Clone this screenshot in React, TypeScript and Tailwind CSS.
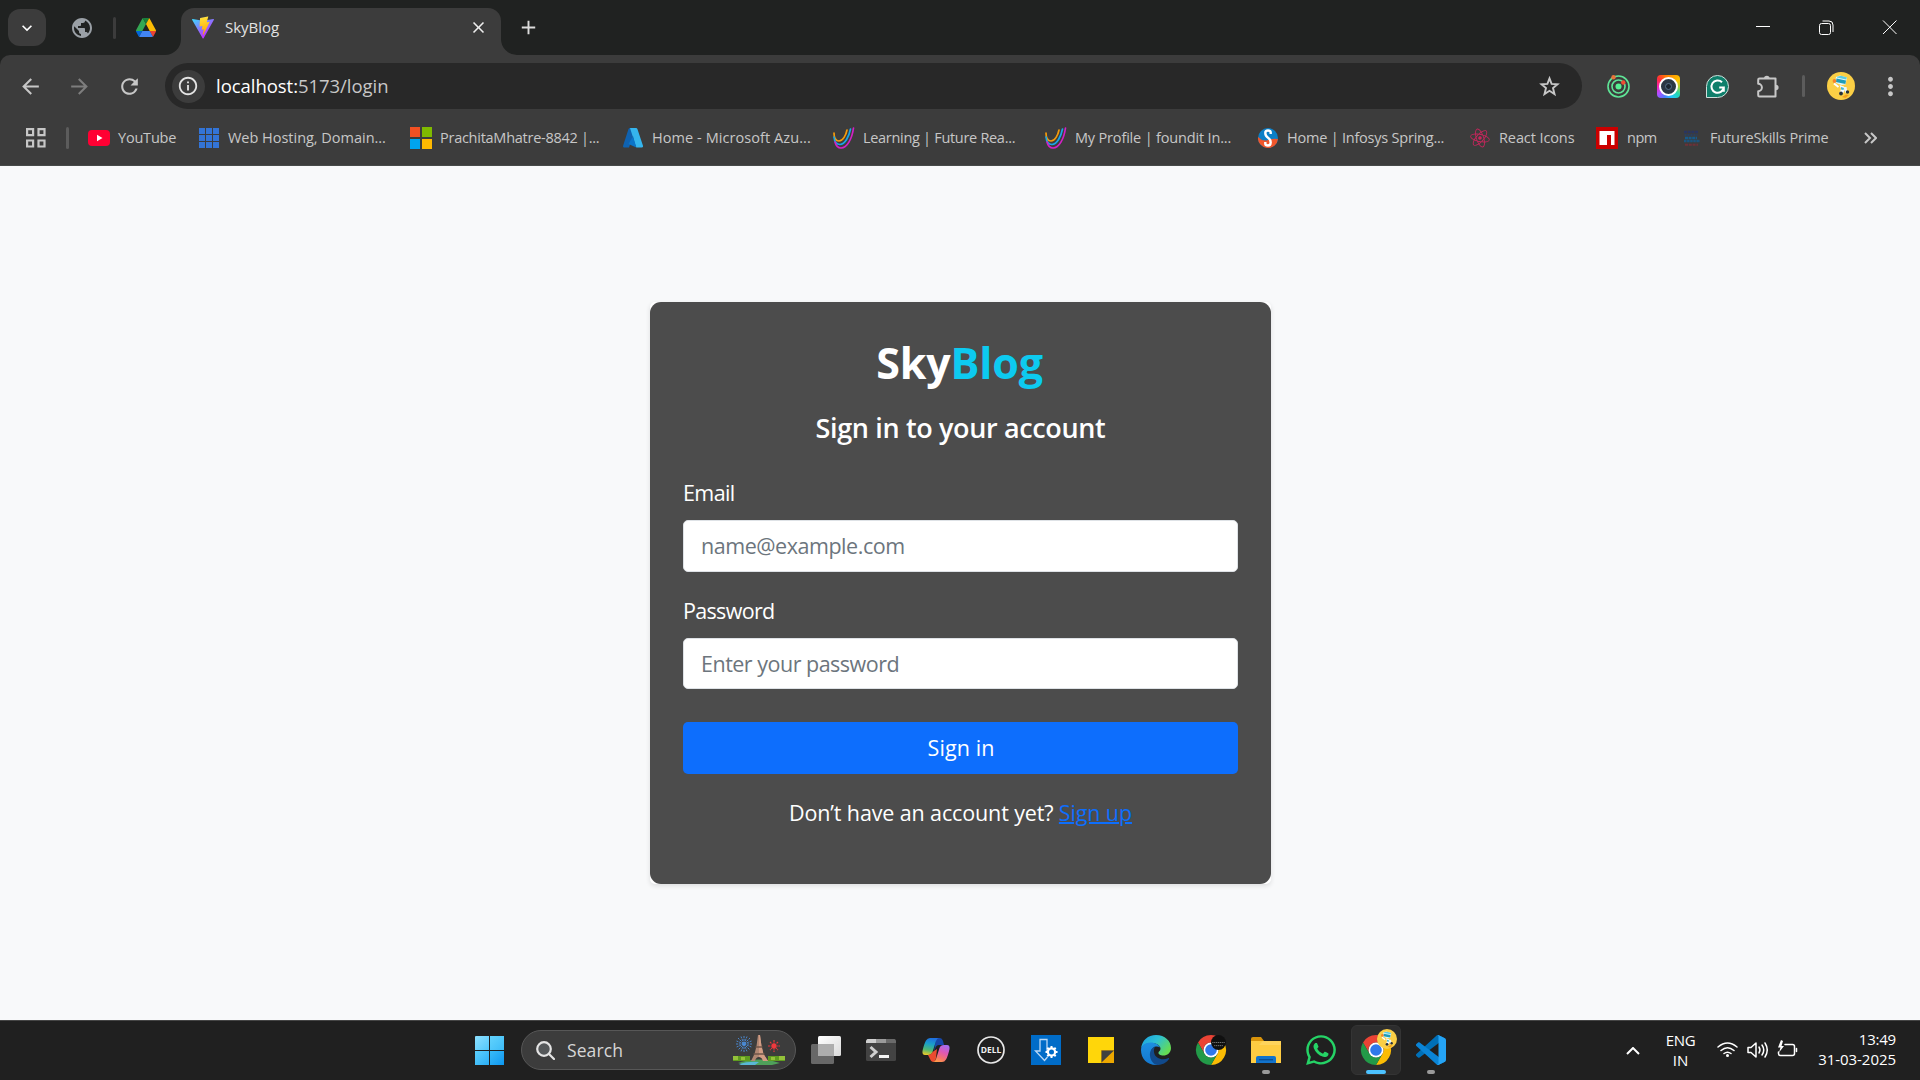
import type { ReactNode } from "react";
import { MdAdd, MdArrowBack, MdArrowForward, MdClose, MdInfoOutline, MdKeyboardArrowDown, MdMoreVert, MdPublic, MdRefresh } from "react-icons/md";
import { FaReact, FaWhatsapp } from "react-icons/fa";

function ViteLogo() {
  return (
    <svg viewBox="0 0 256 257" className="h-[23px] w-[22px] shrink-0">
      <defs>
        <linearGradient id="viteA" x1="0" x2=".6" y1=".1" y2=".85"><stop stopColor="#41D1FF" /><stop offset="1" stopColor="#BD34FE" /></linearGradient>
        <linearGradient id="viteB" x1=".4" x2=".5" y1="0" y2=".9"><stop stopColor="#FFEA83" /><stop offset=".1" stopColor="#FFDD35" /><stop offset="1" stopColor="#FFA800" /></linearGradient>
      </defs>
      <path fill="url(#viteA)" d="M255.153 37.938L134.897 252.976c-2.483 4.44-8.862 4.466-11.382.048L.875 37.958c-2.746-4.814 1.371-10.646 6.827-9.67l120.385 21.517a6.537 6.537 0 0 0 2.322-.004l117.867-21.483c5.438-.991 9.574 4.796 6.877 9.62Z" />
      <path fill="url(#viteB)" d="M185.432.063L96.44 17.501a3.268 3.268 0 0 0-2.634 3.014l-5.474 92.456a3.268 3.268 0 0 0 3.997 3.378l24.777-5.718c2.318-.535 4.413 1.507 3.936 3.838l-7.361 36.047c-.495 2.426 1.782 4.5 4.151 3.78l15.304-4.649c2.372-.72 4.652 1.36 4.15 3.788l-11.698 56.621c-.732 3.542 3.979 5.473 5.943 2.437l1.313-2.028l72.516-144.72c1.215-2.423-.88-5.186-3.54-4.672l-25.505 4.922c-2.396.462-4.435-1.77-3.759-4.114l16.646-57.705c.677-2.35-1.37-4.583-3.769-4.113Z" />
    </svg>
  );
}

function DriveLogo() {
  return (
    <svg viewBox="0 0 87.3 78" preserveAspectRatio="none" className="h-[19px] w-[20px]">
      <path fill="#0066da" d="m6.6 66.85 3.85 6.65c.8 1.4 1.95 2.5 3.3 3.3l13.75-23.8h-27.5c0 1.55.4 3.1 1.2 4.5z" />
      <path fill="#34a853" d="m43.65 25-13.75-23.8c-1.35.8-2.5 1.9-3.3 3.3l-25.4 44a9.06 9.06 0 0 0 -1.2 4.5h27.5z" />
      <path fill="#ea4335" d="m73.55 76.8c1.35-.8 2.5-1.9 3.3-3.3l1.6-2.75 7.65-13.25c.8-1.4 1.2-2.95 1.2-4.5h-27.502l5.852 11.5z" />
      <path fill="#188038" d="m43.65 25 13.75-23.8c-1.35-.8-2.9-1.2-4.5-1.2h-18.5c-1.6 0-3.15.45-4.5 1.2z" />
      <path fill="#4285f4" d="m59.8 53h-32.3l-13.75 23.8c1.35.8 2.9 1.2 4.5 1.2h50.8c1.6 0 3.15-.45 4.5-1.2z" />
      <path fill="#fbbc04" d="m73.4 26.5-12.7-22c-.8-1.4-1.95-2.5-3.3-3.3l-13.75 23.8 16.15 28h27.45c0-1.55-.4-3.1-1.2-4.5z" />
    </svg>
  );
}

function Flare({ flip = false }: { flip?: boolean }) {
  return (
    <svg viewBox="0 0 16 16" className={flip ? "size-4 self-end -scale-x-100" : "size-4 self-end"}>
      <path d="M16 0v16H0A16 16 0 0 0 16 0z" fill="#3c3c3c" />
    </svg>
  );
}

function TabStrip() {
  return (
    <div className="flex h-[55px] items-center bg-[#202221]">
      <div className="ml-2 flex h-[37px] w-[38px] items-center justify-center rounded-[12px] bg-[#3c3c3c] text-white">
        <MdKeyboardArrowDown className="size-5" />
      </div>
      <MdPublic className="ml-[24px] size-6 text-[#9aa0a6]" />
      <div className="ml-[19px] h-[22px] w-[3px] rounded bg-[#3c3c3c]" />
      <div className="ml-[20px]"><DriveLogo /></div>
      <div className="ml-[9px] flex h-full items-end">
        <Flare />
        <div className="flex h-[47px] w-[320px] items-center rounded-t-[13px] bg-[#3c3c3c] pb-[9px] pl-[11px]">
          <ViteLogo />
          <span className="ml-[11px] w-[244px] whitespace-nowrap text-[15px] leading-5 tracking-[-0.04px] text-[#e3e3e3]">SkyBlog</span>
          <MdClose className="size-[19px] shrink-0 text-[#eee]" />
        </div>
        <Flare flip />
      </div>
      <MdAdd className="size-[23px] text-[#dcdcdc]" />
      <svg className="mr-[23px] ml-auto h-[15px] w-[141px]" viewBox="0 0 141 15" fill="none" stroke="#fff">
        <path d="M0 6.5h14" />
        <rect x="63.5" y="3.5" width="11" height="11" rx="2" />
        <path d="M66.500 1h6.500a4 4 0 0 1 4 4v7" />
        <path d="m127 .5 13.500 13.500M140.500.5 127 14" />
      </svg>
    </div>
  );
}

function Toolbar() {
  return (
    <div className="flex h-[62px] items-center text-[#c7c7c7]">
      <MdArrowBack className="ml-[18px] size-[25px]" />
      <MdArrowForward className="ml-[24px] size-[25px] text-[#7d7d7d]" />
      <MdRefresh className="ml-[25px] size-[25px]" />
      <div className="ml-[23px] flex h-[46px] w-[1417px] items-center rounded-full bg-[#282828]">
        <div className="ml-[6.500px] flex size-[33px] items-center justify-center rounded-full bg-[#3c3c3c]">
          <MdInfoOutline className="size-[22px] text-[#e3e3e3]" />
        </div>
        <span className="-mt-px ml-[11.500px] whitespace-nowrap text-[18.500px] leading-6 tracking-[-0.04px] text-[#c7c7c7]"><span className="text-white">localhost:</span>5173/login</span>
        <svg className="mr-[22px] ml-auto size-[21px]" viewBox="0 0 21 21" fill="none" stroke="#c7c7c7" strokeWidth="1.900"><path d="m10.500 2.400 2.100 5.500 5.900.4-4.500 3.800 1.500 6-5-3.300-5 3.300 1.500-6-4.500-3.800 5.900-.4z" /></svg>
      </div>
      <svg className="ml-[25px] size-[23px]" viewBox="0 0 23 23" fill="none" stroke="#5fe496" strokeWidth="1.600">
        <circle cx="11.500" cy="11.500" r="10.500" /><circle cx="11.500" cy="11.500" r="6.500" /><circle cx="11.500" cy="11.500" r="3" fill="#57f092" stroke="none" />
        <circle cx="6.500" cy="2.300" r="2.200" fill="#e8743a" stroke="none" /><circle cx="16.300" cy="7.500" r="2.200" fill="#ef4d32" stroke="none" />
      </svg>
      <div className="ml-[27px] flex size-[23px] items-center justify-center rounded-[4px] bg-[conic-gradient(from_20deg,#ff9a00,#ffc400,#a8d13a,#20d7b0,#23c8ff,#4a7dff,#b44dff,#ff1eb0,#ff2e3a,#ff7a00,#ff9a00)]">
        <div className="flex size-[19px] items-center justify-center rounded-full border-2 border-white bg-[#2b3845]"><div className="size-[7px] rounded-full border border-[#56708a] bg-[#1d2731]" /></div>
      </div>
      <svg className="ml-[26px] size-[23px]" viewBox="0 0 23 23">
        <path d="M11.500.5a11 11 0 1 1 0 22H.5v-11A11 11 0 0 1 11.500.5z" fill="#0f7f6b" stroke="#cfe0dc" />
        <path d="M16 7.200A6.200 6.200 0 1 0 17.800 12.500H13.200M17.800 12.500v4.300" fill="none" stroke="#fff" strokeWidth="2" />
      </svg>
      <svg className="ml-[28px] h-[23px] w-[22px]" viewBox="0 0 22 23">
        <path d="M2.500 3.500h16v18h-16q-1.300 0-1.300-1.300V16.200a3.700 3.700 0 0 0 0-7.400V4.800q0-1.300 1.300-1.300z" fill="none" stroke="#c7c7c7" strokeWidth="2" strokeLinejoin="round" />
        <path d="M7 3.500a2.800 2.800 0 0 1 5.600 0zM18.800 9.700a2.800 2.800 0 0 1 0 5.600z" fill="#c7c7c7" />
      </svg>
      <div className="ml-[23px] h-[22px] w-[3px] rounded bg-[#5c5c5c]" />
      <div className="ml-[22px]"><Avatar className="size-7" /></div>
      <MdMoreVert className="ml-[21px] size-[29px]" />
    </div>
  );
}

function Avatar({ className }: { className: string }) {
  return (
    <svg viewBox="0 0 28 28" className={className}>
      <circle cx="14" cy="14" r="14" fill="#fbcf45" />
      <path d="m9 5 4-1.500 7 2-1.500 7-4 .5L8 10.500z" fill="#dff6fb" />
      <path d="m9.500 6.500 9.500 2-.6 3.500-9.500-2z" fill="#1f9cb6" />
      <path d="m10 4.700 4-1 6 1.800-1 2-9-2z" fill="#5ccbe0" />
      <path d="m12.500 13 4.500 1.500.5 4-1.500 3-3.500-.5 1.500-4z" fill="#f5fbff" />
      <path d="M16.500 15h3l1 5-2 1z" fill="#e9f6fa" /><path d="m14 15 3 1-.5 2-2.500-.5z" fill="#45b8d2" />
      <circle cx="7.500" cy="9" r="1.900" fill="#f5842b" /><path d="m7 11.500 4.500 3.500" stroke="#fff" strokeWidth="2" />
      <circle cx="14" cy="21.500" r="1.900" fill="#28323b" /><circle cx="20.500" cy="20" r="1.700" fill="#28323b" />
      <path d="m15 25 4-2.500 3 .5-3.500 3z" fill="#f5a01e" />
    </svg>
  );
}

function Foundit() {
  return (
    <svg viewBox="0 0 22 22" className="size-[22px]" fill="none" strokeWidth="1.700" strokeLinecap="round">
      <path d="M1 6c0 5 2 8 5 8 4 0 7-6 8-11" stroke="#f59b0b" />
      <path d="M1 10c.500 5 3 7.500 6 7.500 5 0 9-8 10.500-15.500" stroke="#19a7e8" />
      <path d="M2 15c1 4 3 6 6 6 6 0 11-9 12.500-20" stroke="#d321c4" />
    </svg>
  );
}

const bookmarks: { icon: ReactNode; label: string; box: string; text: string }[] = [
  { label: "YouTube", box: "w-[111px] gap-[8px]", text: "tracking-[-0.2px]", icon: <svg viewBox="0 0 22 16" className="h-4 w-[22px]"><rect width="22" height="16" rx="4" fill="#ff0033" /><path d="M9 4.800v6.400l5.500-3.200z" fill="#fff" /></svg> },
  { label: "Web Hosting, Domain...", box: "w-[211px] gap-[9px]", text: "tracking-[-0.02px]", icon: <div className="grid size-5 grid-cols-3 gap-px">{Array.from({ length: 9 }, (_, i) => <i key={i} className="bg-[#3374d6]" />)}</div> },
  { label: "PrachitaMhatre-8842 |...", box: "w-[213px] gap-[8px]", text: "tracking-[-0.26px]", icon: <div className="grid size-[22px] grid-cols-2 gap-[2px]"><i className="bg-[#f25022]" /><i className="bg-[#7fba00]" /><i className="bg-[#00a4ef]" /><i className="bg-[#ffb900]" /></div> },
  { label: "Home - Microsoft Azu...", box: "w-[210px] gap-[9px]", text: "tracking-[0.07px]", icon: <svg viewBox="0 0 20 20" className="size-5"><path d="M6.500 0h6L6 19.500H1.200C.3 19.500-.2 18.600.1 17.800L5.500 1z" fill="#0f62b0" /><path d="M9 12.500l6 .5-1 6.500z" fill="#1267b8" /><path d="M7 0h6c.7 0 1.200.4 1.400 1L20 17.800c.3.900-.3 1.700-1.200 1.700h-5.500z" fill="#35b5ee" /><path d="M10 8l-4.500 8 7.800 3.500z" fill="#0b74c8" /></svg> },
  { label: "Learning | Future Rea...", box: "w-[212px] gap-[8px]", text: "tracking-[-0.3px]", icon: <Foundit /> },
  { label: "My Profile | foundit In...", box: "w-[213px] gap-[8px]", text: "tracking-[-0.17px]", icon: <Foundit /> },
  { label: "Home | Infosys Spring...", box: "w-[212px] gap-[9px]", text: "tracking-[-0.22px]", icon: <svg viewBox="0 0 20 20" className="size-5"><circle cx="10" cy="10" r="10" fill="#0b7fc7" /><path d="M0 9q5 5 10 3t10-1A10 10 0 0 1 0 9z" fill="#f0562b" /><path d="M12.700 6V4.500Q12.700 2.500 10 2.500T7.300 5Q7.300 8 10 9.700T12.700 14.500Q12.700 17.500 10 17.500T7.300 15.500V14" fill="none" stroke="#fff" strokeWidth="2.400" /></svg> },
  { label: "React Icons", box: "w-[126px] gap-[9px]", text: "tracking-[-0.1px]", icon: <FaReact className="size-5 rotate-12 text-[#c7265c]" /> },
  { label: "npm", box: "w-[87px] gap-[9px]", text: "tracking-[-0.5px]", icon: <svg viewBox="0 0 22 22" className="size-[22px]"><path fill="#cb0000" d="M0 0h22v22H0z" /><path fill="#fff" d="M3.500 4h15v14H15V8h-4v10H3.500z" /></svg> },
  { label: "FutureSkills Prime", box: "w-[181px] gap-[10px]", text: "tracking-[-0.18px]", icon: <svg viewBox="0 0 17 16" className="h-4 w-[17px]" strokeWidth="2.600" fill="none"><path d="M1 2h14" stroke="#2a3560" strokeDasharray="3 .7" /><path d="M1.500 5h13" stroke="#26406b" strokeWidth="1.500" strokeDasharray="2 1" /><path d="M2 8h12" stroke="#175a8a" strokeDasharray="3 .6" /><path d="M1 11h16" stroke="#1a5580" strokeDasharray="2.500 .6" /><path d="M2 14.700h13" stroke="#6e3038" strokeWidth="2" strokeDasharray="3 .8" /></svg> },
];

function BookmarkBar() {
  return (
    <div className="flex h-[49px] items-center border-b border-[#474a49] pb-[6px] text-[14.500px] text-[#c7c7c7]">
      <svg className="ml-[26px] size-5" viewBox="0 0 20 20" fill="none" stroke="#c7c7c7" strokeWidth="2.200"><path d="M1.100 1.100h6v6h-6zM12.500 1.100h6v6h-6zM1.100 12.500h6v6h-6zM12.500 12.500h6v6h-6z" /></svg>
      <div className="ml-[20px] mr-[19px] h-[22px] w-[3px] rounded bg-[#5c5c5c]" />
      {bookmarks.map((b) => (
        <div key={b.label} className={`flex shrink-0 items-center ${b.box}`}>
          {b.icon}
          <span className={`whitespace-nowrap leading-5 ${b.text}`}>{b.label}</span>
        </div>
      ))}
      <svg className="h-[12px] w-[13px]" viewBox="0 0 13 12" fill="none" stroke="#c7c7c7" strokeWidth="2"><path d="m1 1 5 5-5 5M7 1l5 5-5 5" /></svg>
    </div>
  );
}

function LoginCard() {
  return (
    <div className="h-[582px] w-[621px] rounded-[5px] bg-white shadow-[0_2px_5px_rgba(0,0,0,0.11)]">
      <div className="flex h-full flex-col rounded-[11px] bg-[#4c4c4c] px-[33px] pt-[29px] text-[21.500px] text-white">
        <h1 className="pr-[2px] text-center text-[43px] leading-[64px] font-bold tracking-[-0.17px]">Sky<span className="text-[#0dcaf0]">Blog</span></h1>
        <h2 className="mt-[13px] text-center text-[27px] leading-[40px] font-semibold tracking-[-0.36px]">Sign in to your account</h2>
        <label className="mt-[29px] leading-8 tracking-[-0.6px]">Email</label>
        <div className="mt-[11px] flex h-[52px] items-center rounded-[5px] border border-[#dee2e6] bg-white px-[17px] tracking-[-0.46px] text-[#6c757d]">name@example.com</div>
        <label className="mt-[23px] leading-8 tracking-[-0.68px]">Password</label>
        <div className="mt-[11px] flex h-[51px] items-center rounded-[5px] border border-[#dee2e6] bg-white px-[17px] pt-px tracking-[-0.5px] text-[#6c757d]">Enter your password</div>
        <button className="mt-[33px] flex h-[52px] items-center justify-center rounded-[5px] bg-[#0d6efd] pl-px tracking-[0.1px]">Sign in</button>
        <p className="mt-[23px] text-center leading-8 tracking-[-0.13px]">Don’t have an account yet? <a className="text-[#0d6efd] underline decoration-2">Sign up</a></p>
      </div>
    </div>
  );
}

function Chrome({ children }: { children?: ReactNode }) {
  return (
    <svg viewBox="0 0 48 48" className="size-[30px] overflow-visible">
      <path fill="#ea4335" d="M24 12H44.800A24 24 0 0 0 3.200 12L13.600 30A12 12 0 0 1 24 12z" />
      <path fill="#fbbc04" d="M24 12a12 12 0 0 1 10.390 18L24 48A24 24 0 0 0 44.785 12z" />
      <path fill="#229a48" d="M34.390 30A12 12 0 0 1 13.610 30L3.215 12A24 24 0 0 0 24 48z" />
      <circle cx="24" cy="24" r="12" fill="#fff" /><circle cx="24" cy="24" r="9.300" fill="#2f78ea" />
      {children}
    </svg>
  );
}

function Slot({ children, active = false, mark = false }: { children: ReactNode; active?: boolean; mark?: boolean }) {
  return (
    <div className={active ? "relative mx-[2.500px] flex h-[50px] w-[50px] items-center justify-center rounded-[6px] border border-[#343434] bg-[#2d2d2d]" : "relative mx-[2.500px] flex h-[50px] w-[50px] items-center justify-center"}>
      {children}
      {active && <div className="absolute bottom-0 h-1 w-5 rounded-full bg-[#4cc2ff]" />}
      {mark && <div className="absolute bottom-px h-1 w-2 rounded-full bg-[#9a9a9a]" />}
    </div>
  );
}

function Landmark() {
  return (
    <svg viewBox="0 0 52 30" className="h-[30px] w-[52px]">
      <path d="M11 1v16M3 9h16M5 3l12 12M17 3 5 15M8 1.500l6 15M14 1.500l-6 15M3.500 6l15 6M18.500 6l-15 6" stroke="#4c8fdc" strokeWidth=".9" strokeDasharray="2 .8" />
      <path d="M41 5v12M35 11h12M37 7l8 8M45 7l-8 8" stroke="#e8343a" strokeWidth="1.200" strokeDasharray="2 .6" /><circle cx="41" cy="11" r="2.400" fill="#f0393d" />
      <path d="M5 28q20-7 42 0l-8 2H14z" fill="#4fa05a" /><path d="M6 29q10-3 20-2l-4 3H8z" fill="#59b7d6" />
      <path d="M0 21h17v5H0zM35 21h17v5H35z" fill="#5f9c1f" /><path d="M0 21h5v4H0zM8 22h4v3H8zM38 22h4v3h-4zM46 21h6v4h-6z" fill="#94c23a" />
      <path d="M25 0h2l1.500 11 2 8L35 26h-5q-1-4-4-4t-4 4h-4l3.500-7 2-8z" fill="#b08773" /><path d="M26 0h1l1.500 11 2 8L35 26h-5q-1-4-4-4z" fill="#d29c84" />
      <path d="M22.500 12h7M20.500 19h11" stroke="#6f5549" strokeWidth="1.500" />
    </svg>
  );
}

function Taskbar() {
  return (
    <div className="flex h-[60px] items-center border-t border-[#454545] bg-[#202020] text-white">
      <div className="ml-[475px] grid size-[29px] shrink-0 grid-cols-2 gap-px">
        <i className="rounded-tl-[1px] bg-linear-to-br from-[#8ce0ff] to-[#4fc8fb]" /><i className="bg-linear-to-br from-[#62d3fd] to-[#3cbcf8]" />
        <i className="bg-linear-to-br from-[#5ccffc] to-[#28aef5]" /><i className="bg-linear-to-br from-[#38bbf8] to-[#0a97f0]" />
      </div>
      <div className="-mt-px ml-[17px] flex h-10 w-[275px] items-center rounded-full border border-[#575757] bg-[#3c3c3c]">
        <svg className="ml-[14px] size-[19px]" viewBox="0 0 19 19" fill="none" stroke="#e4e4e4" strokeWidth="2.200"><circle cx="8" cy="8" r="6.800" fill="#55585a" /><path d="m13 13 5 5" strokeLinecap="round" /></svg>
        <span className="ml-[12px] text-[17.500px] tracking-[0.1px] text-[#d6d6d6]">Search</span>
        <div className="mr-[10px] ml-auto"><Landmark /></div>
      </div>
      <div className="-mt-px ml-[2.500px] flex items-center">
        <Slot><svg viewBox="0 0 30 28" className="h-7 w-[30px]"><defs><linearGradient id="tv" x2="1" y2="1"><stop stopColor="#fff" /><stop offset="1" stopColor="#dadada" /></linearGradient></defs><rect x="7" width="23" height="20" rx="1.500" fill="url(#tv)" /><rect y="8" width="23" height="20" rx="1.500" fill="#686868" /><path d="M7 8h16v12H7z" fill="#adadad" /></svg></Slot>
        <Slot><svg viewBox="0 0 30 22" className="h-[22px] w-[30px]"><rect width="30" height="22" rx="1.500" fill="#434343" /><path d="M1.500 0H10v4H0V1.500z" fill="#cfcfcf" /><path d="M10 0h10v4H10z" fill="#9a9a9a" /><path d="M20 0h8.500L30 1.500V4H20z" fill="#6a6a6a" /><path d="m4.500 8 5.500 5-5.500 5" fill="none" stroke="#cfcfcf" strokeWidth="3" /><path d="M13 16h10v3H13z" fill="#f4f4f4" /></svg></Slot>
        <Slot><svg viewBox="0 0 28 26" className="h-[26px] w-7"><defs>
          <linearGradient id="cpA" x1=".5" x2=".3" y2="1"><stop stopColor="#1f6fe0" /><stop offset=".35" stopColor="#1aa0c8" /><stop offset=".7" stopColor="#4fb872" /><stop offset="1" stopColor="#e8c92b" /></linearGradient>
          <linearGradient id="cpB" x1=".7" x2=".3" y2="1"><stop stopColor="#a66cf0" /><stop offset=".4" stopColor="#e057b4" /><stop offset=".75" stopColor="#f5736b" /><stop offset="1" stopColor="#ff9a4a" /></linearGradient></defs>
          <path d="M14 1h4q2 0 3 3l1 4h-5q-3 0-4 4l-1 3z" fill="#1747a8" />
          <path d="M8 1h9q-2 0-3 3l-3.500 11Q9.500 18 6 18H3Q0 18 .500 14 2 7 4 3.500 5.500 1 8 1z" fill="url(#cpA)" />
          <path d="M6 18q3 0 4.500-3l4.500-3-1 9q-1 4-3 4-2 0-3-3z" fill="#ec4a2f" />
          <path d="M20 25h-9q2 0 3-3l3.500-11Q18.500 8 22 8h3q3 0 2.500 4-1.500 7-3.500 10.500Q22.500 25 20 25z" fill="url(#cpB)" />
        </svg></Slot>
        <Slot><svg viewBox="0 0 28 28" className="size-7"><circle cx="14" cy="14" r="13" fill="none" stroke="#e8e8e8" strokeWidth="1.700" /><text x="14" y="17" textAnchor="middle" textLength="20.500" lengthAdjust="spacingAndGlyphs" className="fill-[#f0f0f0] text-[8.500px] font-bold">DELL</text></svg></Slot>
        <Slot><svg viewBox="0 0 30 30" className="size-[30px]"><path d="M0 0h30v30H0z" fill="#006cc8" /><path d="M16 17V4.500H9V16H4.500l9 9.500 3-3.500" fill="none" stroke="#b8d8f6" strokeWidth="1.300" /><circle cx="20.500" cy="17" r="3.600" fill="none" stroke="#fff" strokeWidth="2.200" /><path d="M20.500 11v2.500M20.500 20.500V23M14.500 17H17M24 17h2.500M16.300 12.800l1.700 1.700M23 19.500l1.700 1.700M16.300 21.200l1.700-1.700M23 14.500l1.700-1.700" stroke="#fff" strokeWidth="2" /></svg></Slot>
        <Slot><svg viewBox="0 0 26 26" className="size-[26px]"><path d="M0 0h26v26H0z" fill="#ffd60a" /><path d="M13 26V13h13v13z" fill="#eda800" /><path d="M13.500 25.500v-12H26z" fill="#404040" /></svg></Slot>
        <Slot><svg viewBox="0 0 30 30" className="size-[30px]"><defs>
          <linearGradient id="egA" x2="1" y2=".6"><stop stopColor="#1a9de0" /><stop offset=".5" stopColor="#2dc0d4" /><stop offset="1" stopColor="#65dc53" /></linearGradient>
          <linearGradient id="egB" x2="0" y2="1"><stop stopColor="#1d8fe0" /><stop offset="1" stopColor="#1478d0" /></linearGradient></defs>
          <path d="M0 14C1 5 7 0 15 0c9 0 15 6 15 13 0 5-4 7.500-7.500 7.500S17 19 17.500 17.500 19.500 16 19.500 13.500 16 8 10.500 8 1 10.500 0 14z" fill="url(#egA)" />
          <path d="M0 15C0 10.500 4 7.500 9.500 7.500c5 0 8.500 2.500 9.700 5-4-2.500-8.500 0-9.200 4-1 5.500 2 11 8 12.500-1 .8-2 1-3 1C6 30 0 23.500 0 15z" fill="url(#egB)" />
          <path d="M14 11.500c-4 1.500-5.500 6-5 9.500.6 4.500 3.500 9 8 8.900C22.500 29.500 26 27 28 24c.5-.8-.3-1.200-1-.8-5 2.300-13 .8-14-6-.3-2 .2-4 1-5.700z" fill="#114a8c" />
        </svg></Slot>
        <Slot><Chrome><circle cx="36" cy="12" r="12" fill="#101010" /><path d="M26 12h20M29 17h14" stroke="#777" strokeWidth="1.500" strokeDasharray="2 1" /></Chrome></Slot>
        <Slot mark><svg viewBox="0 0 30 30" className="size-[30px]"><path d="M0 4q0-2 2-2h8l3 4H0z" fill="#d9940b" /><path d="M0 6h30v22H0z" fill="#ffcc42" /><path d="M12 6h16q2 0 2 2v2H8z" fill="#ffd45c" /><path d="M5 28v-5q0-2 2-2h16q2 0 2 2v5z" fill="#1273cc" /><path d="M8 24.700h14" stroke="#0b4f96" strokeWidth="1.400" /></svg></Slot>
        <Slot><FaWhatsapp className="size-[34px] text-[#25d366]" /></Slot>
        <Slot active><Chrome /><div className="absolute top-[3px] left-[25px]"><Avatar className="size-5" /></div></Slot>
        <Slot mark><svg viewBox="0 0 100 100" className="size-[30px]">
          <path fill="#0070b8" d="M96.461 10.796L75.857.876C73.472-.273 70.622.212 68.750 2.083L1.299 63.583C-.516 65.237-.514 68.094 1.303 69.745L6.813 74.754C8.298 76.104 10.535 76.204 12.134 74.991L93.361 13.370C96.086 11.303 100 13.246 100 16.667V16.427C100 14.027 98.625 11.838 96.461 10.796Z" />
          <path fill="#0a84d6" d="M96.461 89.204L75.857 99.125C73.472 100.273 70.622 99.788 68.750 97.917L1.299 36.417C-.516 34.763-.514 31.906 1.303 30.255L6.813 25.246C8.298 23.896 10.535 23.796 12.134 25.010L93.361 86.630C96.086 88.697 100 86.754 100 83.333V83.573C100 85.974 98.625 88.162 96.461 89.204Z" />
          <path fill="#25a4f5" d="M75.858 99.126C73.472 100.274 70.622 99.789 68.750 97.917C71.056 100.223 75 98.590 75 95.328V4.672C75 1.410 71.056-.223 68.750 2.083C70.622.211 73.472-.274 75.858.874L96.459 10.781C98.623 11.822 100 14.011 100 16.413V83.587C100 85.989 98.623 88.179 96.459 89.220L75.858 99.126Z" />
        </svg></Slot>
      </div>
      <svg className="ml-[167px] h-2 w-[14px]" viewBox="0 0 14 8" fill="none" stroke="#fff" strokeWidth="2"><path d="m1 7 6-6 6 6" /></svg>
      <div className="-mt-[2px] ml-[25px] flex w-[32px] flex-col items-center text-[15px] leading-5"><span className="tracking-[-0.35px]">ENG</span><span>IN</span></div>
      <svg className="-mt-px ml-[20px] h-[20px] w-[81px]" viewBox="0 0 81 20" fill="none" stroke="#fff" strokeWidth="1.500" strokeLinecap="round" strokeLinejoin="round">
        <path d="M1 7q9.500-8 19 0M4 10.500q6.500-5.500 13 0M7 13.500q3.500-2.700 7 0" /><circle cx="10.500" cy="15.500" r="1.500" fill="#fff" stroke="none" />
        <path d="M31 7.500h3l5-4.500v14l-5-4.500h-3zM42 7q2 3 0 6M45 5q3.500 5 0 10M48 3q4.500 7 0 14" />
        <path d="M68 4.500h7.500q2 0 2 2v7q0 2-2 2H63.500q-2 0-2-2V12M79.500 8.500v3" /><path d="m64 0-3 7.500h2.500L62 12.500l5-6.500h-2.500L66 1z" fill="#fff" stroke="none" />
      </svg>
      <div className="-mt-[4px] mr-6 ml-auto flex flex-col items-end text-[15px] leading-5"><span className="tracking-[-0.2px]">13:49</span><span className="tracking-[-0.04px]">31-03-2025</span></div>
    </div>
  );
}

export default function App() {
  return (
    <div className="flex h-[1080px] w-[1920px] flex-col overflow-hidden bg-[#202221] font-['Open_Sans','Noto_Sans',sans-serif]">
      <TabStrip />
      <header className="h-[111px] rounded-t-[10px] bg-[#3c3c3c]"><Toolbar /><BookmarkBar /></header>
      <main className="flex flex-1 items-start justify-center bg-[#f8f9fa] pt-[136px] pl-px">
        <LoginCard />
      </main>
      <Taskbar />
    </div>
  );
}
